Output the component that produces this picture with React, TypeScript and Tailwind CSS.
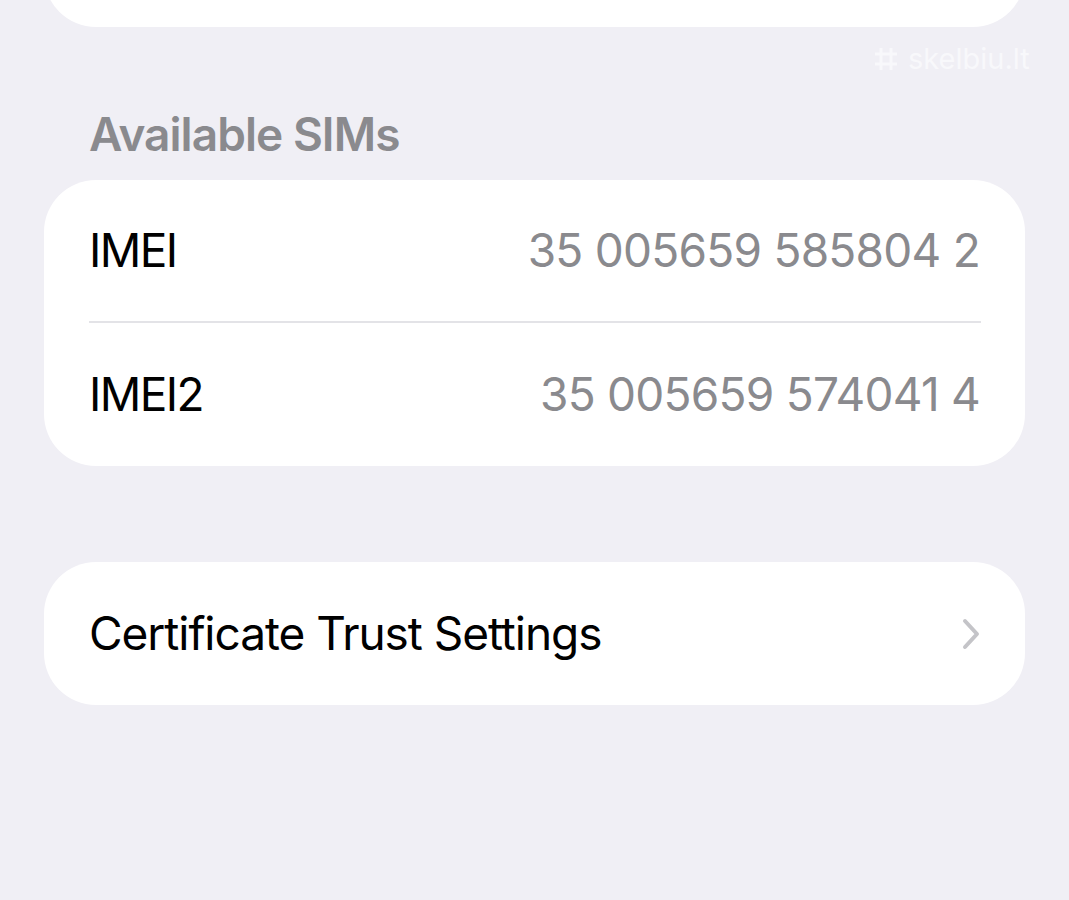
import React from "react";

const font = { fontFamily: "Inter, 'Noto Sans', sans-serif" };

function Chevron() {
  return (
    <svg width="22" height="34" viewBox="0 0 22 34" fill="none">
      <path d="M5 4 L17 17 L5 30" stroke="#c4c4c8" strokeWidth="4" strokeLinecap="round" strokeLinejoin="round" />
    </svg>
  );
}

export default function App() {
  return (
    <div className="w-[1069px] h-[900px] overflow-hidden bg-[#f0eff5] flex flex-col" style={font}>
      <div className="mx-[44px] h-[120px] -mt-[93px] rounded-[52px] bg-white shrink-0" />
      <div className="relative h-[0px]">
        <div className="absolute left-[872px] top-[16px] flex items-center gap-[8px] text-[#f8f8fb]">
          <svg width="28" height="28" viewBox="0 0 28 28" fill="none" stroke="#f8f8fb" strokeWidth="3">
            <path d="M9 3 V25 M19 3 V25 M3 9 H25 M3 19 H25" />
          </svg>
          <span className="text-[29px] leading-[32px]">skelbiu.lt</span>
        </div>
      </div>
      <div className="mt-[79px] pl-[89px] h-[56px] leading-[56px] text-[46px] font-semibold text-[#8a8a8e] tracking-[-0.95px]">
        Available SIMs
      </div>
      <div className="mt-[18px] mx-[44px] rounded-[52px] bg-white flex flex-col">
        <div className="h-[141px] px-[45px] flex items-center justify-between text-[46px]">
          <span className="text-black tracking-[-1.6px]">IMEI</span>
          <span className="text-[#8a8a8e] tracking-[-0.75px]">35 005659 585804 2</span>
        </div>
        <div className="ml-[45px] mr-[44px] h-[2px] bg-[#e3e3e7]" />
        <div className="h-[143px] px-[45px] flex items-center justify-between text-[46px]">
          <span className="text-black tracking-[-1.6px]">IMEI2</span>
          <span className="text-[#8a8a8e] tracking-[-0.75px]">35 005659 574041 4</span>
        </div>
      </div>
      <div className="mt-[96px] mx-[44px] h-[143px] rounded-[52px] bg-white px-[45px] pr-[43px] flex items-center justify-between">
        <span className="text-[46px] text-black tracking-[-1.05px]">Certificate Trust Settings</span>
        <Chevron />
      </div>
    </div>
  );
}
